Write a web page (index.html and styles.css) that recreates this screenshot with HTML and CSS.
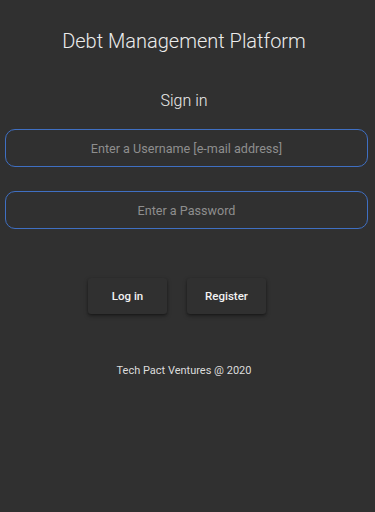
FILE: index.html
```html
<!DOCTYPE html>
<html lang="en">
<head>
<meta charset="utf-8">
<title>Debt Management Platform</title>
<link rel="stylesheet" href="styles.css">
</head>
<body>
<main class="page">
  <h1 class="title">Debt Management Platform</h1>
  <h2 class="subtitle">Sign in</h2>
  <form class="form">
    <input class="field" type="text" placeholder="Enter a Username [e-mail address]">
    <input class="field field-pass" type="password" placeholder="Enter a Password">
    <div class="actions">
      <button type="button" class="btn">Log in</button>
      <button type="button" class="btn">Register</button>
    </div>
  </form>
  <p class="footer">Tech Pact Ventures @ 2020</p>
</main>
</body>
</html>
```
FILE: styles.css
```css
html, body {
  margin: 0;
  padding: 0;
  background: #303030;
  height: 100%;
}
body {
  font-family: Roboto, "Liberation Sans", sans-serif;
  color: #e8e8e8;
}
.page {
  width: 368px;
  display: flex;
  flex-direction: column;
  align-items: center;
}
.title {
  margin: 29px 0 0;
  font-size: 20px;
  line-height: 24px;
  font-weight: 300;
  color: #ececec;
}
.subtitle {
  margin: 38px 0 0;
  font-size: 16px;
  line-height: 20px;
  font-weight: 300;
  color: #ececec;
}
.form {
  align-self: stretch;
  display: flex;
  flex-direction: column;
  padding-left: 5px;
}
.field {
  box-sizing: border-box;
  height: 38px;
  margin-top: 18px;
  border: 1px solid #3f6fc2;
  border-radius: 10px;
  background: #303030;
  text-align: center;
  font-family: Roboto, "Liberation Sans", sans-serif;
  font-size: 12.6px;
  color: #ddd;
  outline: none;
}
.field::placeholder {
  color: #8e8e8e;
}
.field-pass {
  margin-top: 24px;
}
.actions {
  display: flex;
  justify-content: center;
  gap: 20px;
  margin-top: 49px;
  padding-right: 19px;
}
.btn {
  width: 79px;
  height: 36px;
  border: none;
  border-radius: 3px;
  background: #303030;
  color: #f2f2f2;
  font-family: Roboto, "Liberation Sans", sans-serif;
  font-size: 11.5px;
  font-weight: 500;
  box-shadow: 0 2px 4px rgba(0,0,0,0.35), 0 1px 2px rgba(0,0,0,0.25);
}
.footer {
  margin: 49px 0 0;
  font-size: 11px;
  line-height: 16px;
  color: #dcdcdc;
}
```
